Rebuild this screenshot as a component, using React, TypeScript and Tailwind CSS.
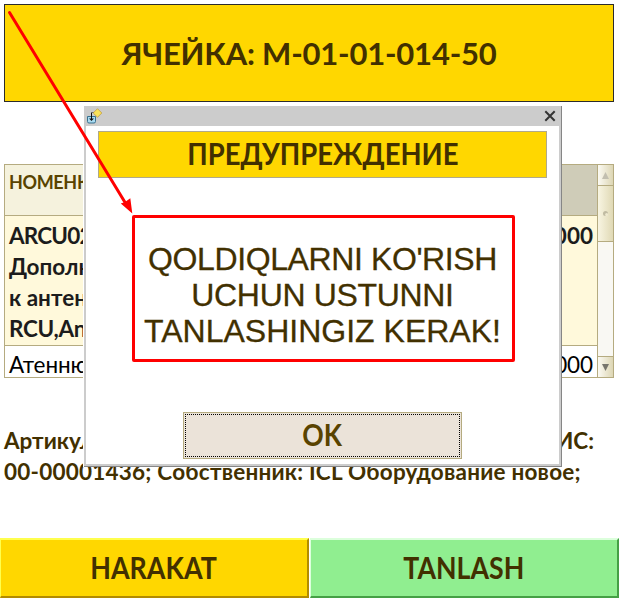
import React from "react";

function ScrollBar() {
  return (
    <div className="flex w-[16px] shrink-0 flex-col border-l border-[#b5ab80] bg-[#f9f8f3]">
      <div className="flex h-[21px] items-center justify-center border-b border-[#b5ab80] bg-gradient-to-r from-[#fbfaf3] to-[#ddd6b4]">
        <svg width="7" height="7" viewBox="0 0 7 7"><path d="M3.5 0L7 7H0Z" fill="#c2bfb0" /></svg>
      </div>
      <div className="flex h-[56px] items-center justify-center border-b border-[#b5ab80] bg-gradient-to-r from-[#f8f5e2] to-[#e0d9b5]">
        <svg width="5" height="5" viewBox="0 0 5 5"><circle cx="2.5" cy="2.5" r="2.5" fill="#c0bba2" /><circle cx="3.6" cy="3.6" r="1.5" fill="#eee9cf" /></svg>
      </div>
      <div className="flex-1" />
      <div className="flex h-[21px] items-center justify-center border-t border-[#b5ab80] bg-gradient-to-r from-[#fbfaf3] to-[#ddd6b4]">
        <svg width="7" height="7" viewBox="0 0 7 7"><path d="M0 0H7L3.5 7Z" fill="#77756d" /></svg>
      </div>
    </div>
  );
}

function ItemTable() {
  return (
    <div className="mx-[4px] mt-[62px] flex h-[214px] w-[610px] overflow-hidden border border-[#b5ab80]">
      <div className="flex flex-1 flex-col whitespace-nowrap">
        <div className="flex h-[51px] shrink-0 border-b border-[#b5ab80]">
          <div className="w-[300px] bg-[#f5f2dd] pl-[4px] pt-[5px] text-[18px] font-bold leading-[24px] tracking-[-0.35px] text-[#594300]">НОМЕНКЛАТУРА</div>
          <div className="flex-1 bg-[#cfccb8]" />
        </div>
        <div className="flex h-[130px] shrink-0 justify-between border-b border-[#b5ab80] bg-[#fff9db] px-[4px] pt-[4px] text-[22.5px] font-bold leading-[31px] text-[#1c1c1c]">
          <div><span className="tracking-[-0.8px]">ARCU02</span><br />Дополнение<br />к антенне<br /><span className="tracking-[-0.3px]">RCU,Antenna</span></div>
          <div>1,000</div>
        </div>
        <div className="flex h-[40px] shrink-0 justify-between bg-white px-[4px] pt-[3px] text-[22.5px] leading-[31px] tracking-[-0.1px] text-black">
          <div>Атеннюатор</div>
          <div>1,000</div>
        </div>
      </div>
      <ScrollBar />
    </div>
  );
}

function WarningDialog() {
  return (
    <div className="absolute left-[83px] top-[106px] flex h-[361px] w-[479px] border-l border-white">
      <div className="flex flex-1 flex-col border-b border-r border-[#868686] bg-white">
        <div className="flex h-[20px] shrink-0 items-center justify-between bg-[#cccccc] pl-[2px] pr-[5px]">
          <svg width="17" height="17" viewBox="0 0 17 17" fill="none">
            <path d="M1.5 8.5h8v5q0 1.5-1.5 1.5H3q-1.5 0-1.5-1.5z" fill="#aadcf2" stroke="#39718f" />
            <path d="M8.5 4.5H5" stroke="#111" strokeDasharray="1 1" />
            <path d="M5.5 5v6" stroke="#111" />
            <path d="M3 10.5h5L5.5 13z" fill="#111" />
            <path d="M11.5 .7l4.3 4.3-4.3 4.3-4.3-4.3z" fill="#f8e25a" stroke="#bc9437" strokeWidth=".7" />
          </svg>
          <svg width="12" height="12" viewBox="0 0 12 12"><path d="M1.3 1.3l9.4 9.4M10.7 1.3L1.3 10.7" stroke="#333" strokeWidth="2" /></svg>
        </div>
        <div className="flex flex-1 flex-col items-center border-x-2 border-b-2 border-[#cccccc] pt-[5px]">
          <div className="flex h-[47px] w-[449px] items-center justify-center border border-[#b0a98a] bg-[#ffd700] text-[29.5px] font-bold text-[#423000]">
            <span className="inline-block scale-x-[0.93]">ПРЕДУПРЕЖДЕНИЕ</span>
          </div>
          <div className="ml-[2px] mt-[37px] h-[147px] w-[383px] whitespace-nowrap rounded-[2px] border-[3px] border-[#ff0000] pr-[2px] pt-[23px] text-center font-['Liberation_Sans',sans-serif] text-[32px] leading-[36px] text-[#423000] [-webkit-text-stroke:0.3px_#423000]">
            <div className="tracking-[-0.39px]">QOLDIQLARNI KO'RISH</div>
            <div className="tracking-[-0.33px]">UCHUN USTUNNI</div>
            <div>TANLASHINGIZ KERAK!</div>
          </div>
          <button className="mt-[50px] h-[47px] w-[279px] border border-[#b5ab80] bg-[#ebe3d9] p-px text-[29.5px] font-bold text-[#594300]">
            <span className="flex h-full items-center justify-center border border-dotted border-black"><span className="inline-block scale-x-[0.9]">OK</span></span>
          </button>
        </div>
      </div>
    </div>
  );
}

export default function App() {
  return (
    <div className="relative flex h-[598px] w-[619px] flex-col overflow-hidden bg-white font-['Lato',sans-serif]">
      <header className="mx-[4px] mt-[4px] flex h-[98px] w-[610px] shrink-0 items-center justify-center border border-[#2b2b2b] bg-[#ffd700] text-[31px] font-bold text-[#423000]">
        <span className="tracking-[-0.2px]">ЯЧЕЙКА: M-01-01-014-50</span>
      </header>
      <ItemTable />
      <div className="mt-[47px] flex h-[62px] shrink-0 flex-col whitespace-nowrap pl-[4px] text-[22.5px] font-bold leading-[31px] text-[#423000]">
        <div className="flex w-[590px] justify-between"><span>Артикул:</span><span>ИС:</span></div>
        <div className="tracking-[0.22px]">00-00001436; Собственник: ICL Оборудование новое;</div>
      </div>
      <footer className="mt-[51px] flex h-[60px] shrink-0 gap-px text-[29.5px] font-bold text-[#423000]">
        <button className="w-[309px] border-b-2 border-l border-r-2 border-t-2 border-b-[#b38b00] border-l-[#ffff4d] border-r-[#b38b00] border-t-[#ffff4d] bg-[#ffd700]"><span className="inline-block scale-x-[0.91]">HARAKAT</span></button>
        <button className="w-[309px] border-b-2 border-l border-r-2 border-t-2 border-b-[#45a045] border-l-[#dcffdc] border-r-[#45a045] border-t-[#dcffdc] bg-[#90ee90]"><span className="inline-block scale-x-[0.905]">TANLASH</span></button>
      </footer>
      <WarningDialog />
      <svg className="pointer-events-none absolute left-0 top-0" width="140" height="220" viewBox="0 0 140 220">
        <path d="M9.5 12.5L126 204" stroke="#ff0000" strokeWidth="3" strokeLinecap="round" />
        <path d="M132.3 213.5L120.8 203.5L125 202L130.3 198.3Z" fill="#ff0000" />
      </svg>
    </div>
  );
}
